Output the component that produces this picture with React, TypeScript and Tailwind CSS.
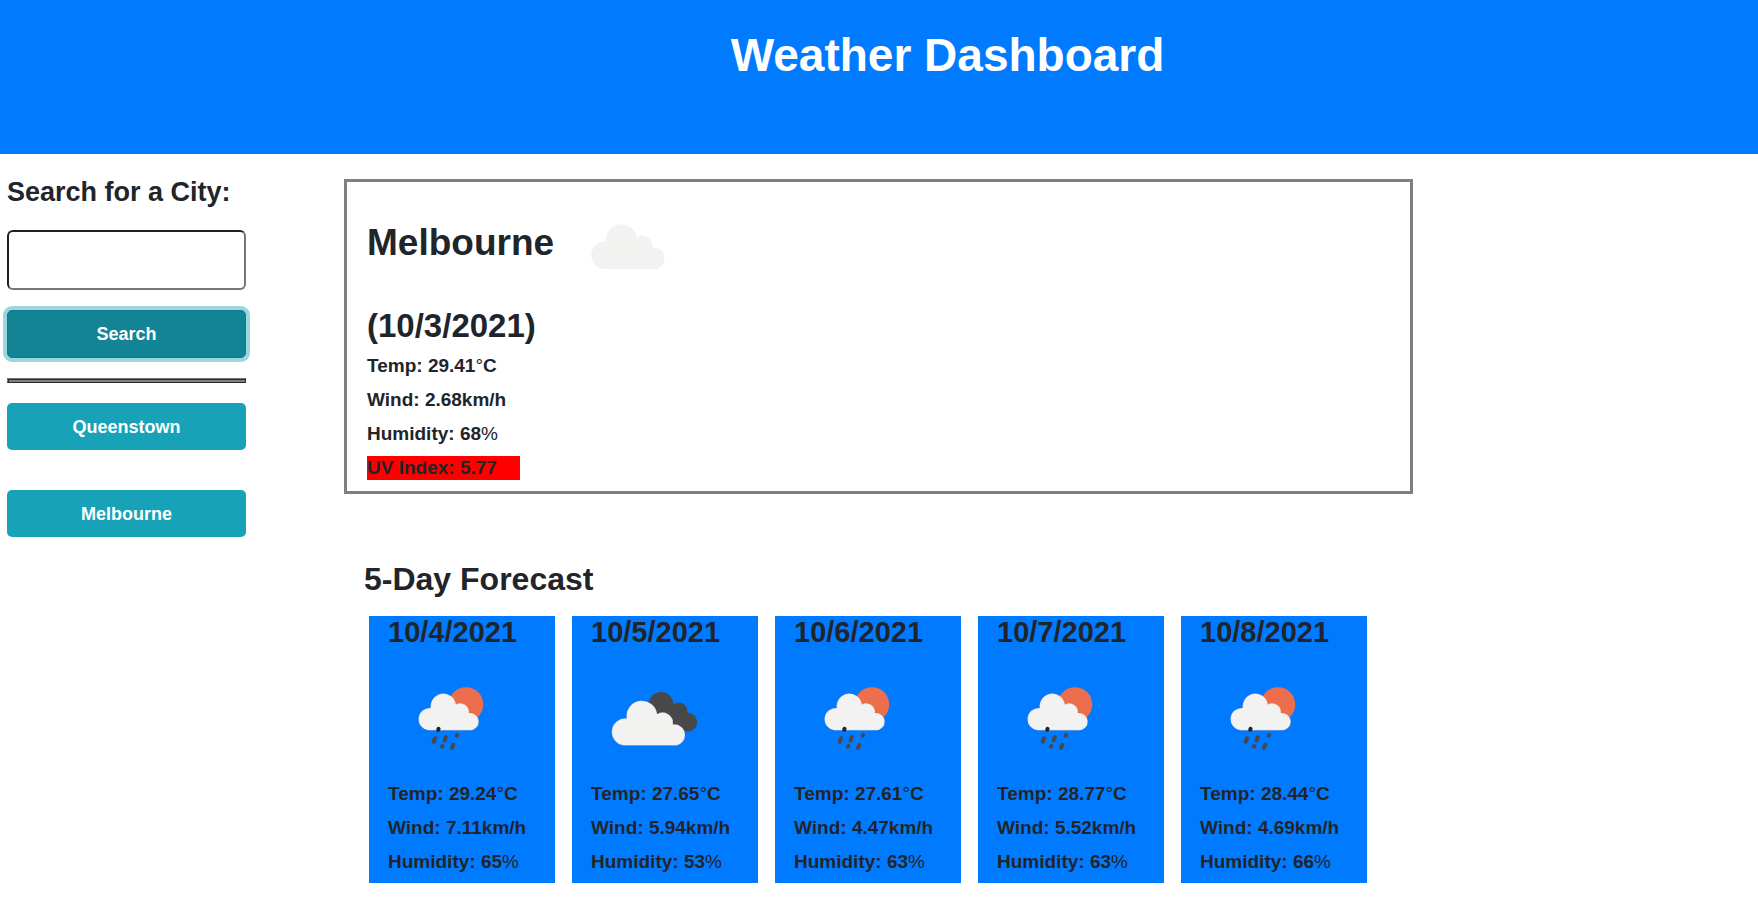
const stats = "flex flex-col text-[19px] leading-6 gap-[10px] whitespace-nowrap";

type Day = { date: string; icon: "rain" | "clouds"; temp: string; wind: string; humidity: string };

const days: Day[] = [
  { date: "10/4/2021", icon: "rain", temp: "29.24", wind: "7.11", humidity: "65" },
  { date: "10/5/2021", icon: "clouds", temp: "27.65", wind: "5.94", humidity: "53" },
  { date: "10/6/2021", icon: "rain", temp: "27.61", wind: "4.47", humidity: "63" },
  { date: "10/7/2021", icon: "rain", temp: "28.77", wind: "5.52", humidity: "63" },
  { date: "10/8/2021", icon: "rain", temp: "28.44", wind: "4.69", humidity: "66" },
];

const history = ["Queenstown", "Melbourne"];

// Cloud outline, 74 x 46, anchored at its top-left corner.
const cloud =
  "M13 46 A13.3 13.3 0 0 1 15.6 18.9 A15.2 15.2 0 1 1 46.2 14.4 A10.6 10.6 0 0 1 62 24.9 A10.6 10.6 0 1 1 63.4 46 Z";

function CloudIcon() {
  return (
    <svg viewBox="0 0 100 100" className="size-25" role="img" aria-label="Cloudy">
      <path d={cloud} transform="translate(14.5 28)" fill="#f2f2f0" />
    </svg>
  );
}

function CloudsIcon() {
  return (
    <svg viewBox="0 0 100 100" className="size-25" role="img" aria-label="Broken clouds">
      <g fill="#48484a">
        <circle cx="52" cy="35.7" r="12.6" />
        <circle cx="70" cy="42" r="8.4" />
        <circle cx="79" cy="53" r="9.2" />
        <path d="M45 45 L63 36 L77 45 L80 62.2 L60 62.2 Z" />
      </g>
      <path d={cloud} transform="translate(2 30.5)" fill="#f2f2f0" stroke="#2c2c38" strokeOpacity="0.25" strokeWidth="0.6" />
    </svg>
  );
}

function RainIcon() {
  return (
    <svg viewBox="0 0 100 100" className="size-25" role="img" aria-label="Rain showers">
      <circle cx="60" cy="35.5" r="17.3" fill="#ec6e4c" />
      <path d={cloud} transform="translate(12 23.6) scale(0.82)" fill="#f2f2f2" stroke="#e0583a" strokeOpacity="0.3" strokeWidth="0.6" />
      <g stroke="#48484a" strokeWidth="4" strokeLinecap="round">
        <path d="M32.6 59.8 L32.2 60.8" stroke="#222222" />
        <path d="M29.1 69.2 L27.7 72.8" />
        <path d="M39.9 68 L38.5 71.4" />
        <path d="M51.1 65.8 L50.7 66.6" />
        <path d="M36.3 77 L35.9 77.6" />
        <path d="M47.4 75.8 L46 79" />
      </g>
    </svg>
  );
}

function Readings({ temp, wind, humidity }: { temp: string; wind: string; humidity: string }) {
  return (
    <>
      <p>Temp: {temp}<span className="font-normal">°</span>C</p>
      <p>Wind: {wind}km/h</p>
      <p>Humidity: {humidity}<span className="font-normal">%</span></p>
    </>
  );
}

export default function App() {
  return (
    <div className="bg-white font-['Liberation_Sans',sans-serif] font-bold text-[#212529]">
      <header className="bg-[#007bff] pt-[25px] pb-[69px] pl-[137px] text-center text-white">
        <h1 className="text-[46px] leading-[60px]">Weather Dashboard</h1>
      </header>

      <div className="flex items-start pl-[7px] pt-[25px]">
        <aside className="mr-[98px] w-[239px] shrink-0">
          <form onSubmit={(e) => e.preventDefault()}>
            <label htmlFor="city" className="block whitespace-nowrap text-[27px] leading-[27px]">
              Search for a City:
            </label>
            <input
              id="city"
              type="text"
              className="mt-6 block h-[60px] w-full rounded-md border-2 border-t-[#212121] border-l-[#212121] border-r-[#767676] border-b-[#767676] bg-white px-3 text-lg outline-none"
            />
            <button
              type="submit"
              className="mt-5 block h-12 w-full rounded-[5px] border border-[#117a8b] bg-[#138496] text-lg text-white shadow-[0_0_0_4px_#9cd6df]"
            >
              Search
            </button>
          </form>
          <hr className="my-5 h-[5px] border border-t-[#767676] border-l-[#767676] border-r-[#2b2b2b] border-b-[#2b2b2b] bg-[#808080] shadow-[inset_1px_1px_0_#2b2b2b]" />
          <div className="flex flex-col gap-10">
            {history.map((city) => (
              <button key={city} type="button" className="h-[47px] rounded-[5px] bg-[#17a2b8] text-lg text-white">
                {city}
              </button>
            ))}
          </div>
        </aside>

        <main className="mr-[345px] min-w-0 flex-1">
          <section className="border-3 border-[#808080] px-5 pb-[11px]">
            <div className="flex items-center gap-[22px] pt-[13px]">
              <h2 className="pb-1 text-[37px] leading-[46px]">Melbourne</h2>
              <CloudIcon />
            </div>
            <h3 className="mt-[11px] mb-2 text-[33px] leading-10">(10/3/2021)</h3>
            <div className={stats}>
              <Readings temp="29.41" wind="2.68" humidity="68" />
              <p className="w-[153px] bg-[red]">UV Index: 5.77</p>
            </div>
          </section>

          <section className="pt-[65px] pl-5">
            <h2 className="text-[32px] leading-10">5-Day Forecast</h2>
            <div className="mt-[17px] mr-[46px] ml-[5px] grid grid-cols-5 gap-[17px]">
              {days.map((d) => (
                <article key={d.date} className="bg-[#007bff] pb-[9px] pl-[19px]">
                  <h3 className="text-[29px] leading-8">{d.date}</h3>
                  <div className="mt-[21px] mb-[13px] ml-[18px]">
                    {d.icon === "rain" ? <RainIcon /> : <CloudsIcon />}
                  </div>
                  <div className={stats}>
                    <Readings temp={d.temp} wind={d.wind} humidity={d.humidity} />
                  </div>
                </article>
              ))}
            </div>
          </section>
        </main>
      </div>
    </div>
  );
}
